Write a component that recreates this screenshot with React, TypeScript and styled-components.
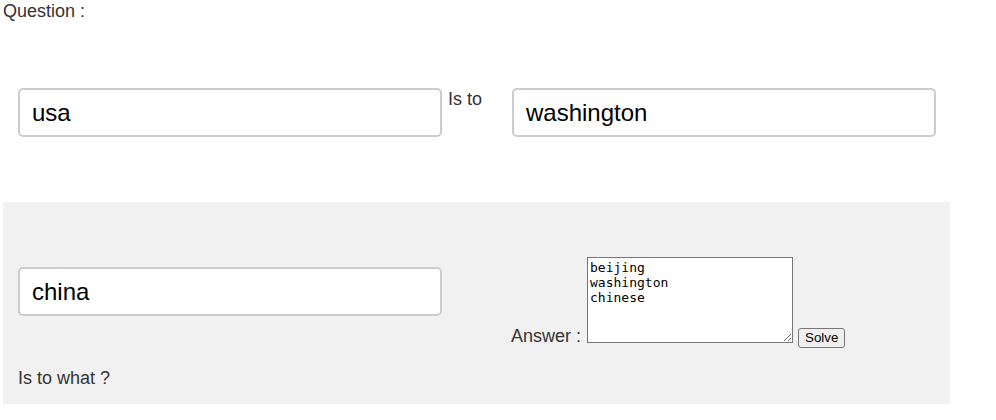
import React from "react";
import styled, { createGlobalStyle } from "styled-components";

const GlobalStyle = createGlobalStyle`
  html, body {
    margin: 0;
    padding: 0;
    background: #ffffff;
  }
  body {
    font-family: "Liberation Sans", Arial, Helvetica, sans-serif;
    font-size: 18px;
    color: #333333;
  }
`;

const Page = styled.div`
  width: 947px;
  padding-left: 3px;
`;

const Heading = styled.p`
  margin: 0;
  font-size: 18px;
  line-height: 22px;
  color: #333333;
`;

const Row = styled.div<{ $top: number }>`
  display: flex;
  align-items: flex-start;
  margin-top: ${(p) => p.$top}px;
`;

const LeftCell = styled.div`
  width: 493px;
  flex-shrink: 0;
  box-sizing: border-box;
  padding: 0 15px;
  display: flex;
  align-items: flex-start;
  gap: 6px;
`;

const RightCell = styled.div`
  padding: 0 15px 0 16px;
`;

const WordInput = styled.input`
  flex-shrink: 0;
  width: 424px;
  height: 49px;
  box-sizing: border-box;
  border: 2px solid #cccccc;
  border-radius: 5px;
  background: #ffffff;
  padding: 0 12px;
  margin: 0;
  font-family: "Liberation Sans", Arial, Helvetica, sans-serif;
  font-size: 24px;
  color: #000000;
  outline: none;
`;

const Label = styled.span`
  font-size: 18px;
  line-height: 22px;
  color: #333333;
  white-space: nowrap;
`;

const Panel = styled.div`
  margin-top: 65px;
  width: 947px;
  height: 202px;
  box-sizing: border-box;
  background: #f1f1f1;
  display: flex;
  align-items: flex-start;
`;

const PanelLeft = styled.div`
  width: 493px;
  flex-shrink: 0;
  box-sizing: border-box;
  padding: 65px 15px 0;
  display: flex;
  flex-direction: column;
  align-items: flex-start;
`;

const WhatLabel = styled(Label)`
  display: block;
  margin-top: 51px;
`;

const AnswerArea = styled.div`
  margin-top: 55px;
  padding-left: 15px;
  display: flex;
  align-items: flex-end;
`;

const AnswerLabel = styled(Label)`
  margin-right: 6px;
  margin-bottom: 1px;
`;

const AnswerBox = styled.textarea`
  width: 206px;
  height: 86px;
  box-sizing: border-box;
  margin: 0 5px 5px 0;
  padding: 2px;
  border: 1px solid #767676;
  border-radius: 0;
  background: #ffffff;
  font-family: "DejaVu Sans Mono", "Liberation Mono", monospace;
  font-size: 13px;
  line-height: 15px;
  color: #000000;
  outline: none;
`;

const SolveButton = styled.button`
  height: 20px;
  box-sizing: border-box;
  margin: 0;
  padding: 1px 6px;
  border: 1px solid #767676;
  border-radius: 3px;
  background: #efefef;
  font-family: "Liberation Sans", Arial, Helvetica, sans-serif;
  font-size: 13.33px;
  line-height: 16px;
  color: #000000;
  cursor: pointer;
`;

export default function App() {
  return (
    <>
      <GlobalStyle />
      <Page>
        <Heading>Question :</Heading>
        <Row $top={66}>
          <LeftCell>
            <WordInput defaultValue="usa" />
            <Label>Is to</Label>
          </LeftCell>
          <RightCell>
            <WordInput defaultValue="washington" />
          </RightCell>
        </Row>
        <Panel>
          <PanelLeft>
            <WordInput defaultValue="china" />
            <WhatLabel>Is to what ?</WhatLabel>
          </PanelLeft>
          <AnswerArea>
            <AnswerLabel>Answer :</AnswerLabel>
            <AnswerBox defaultValue={"beijing\nwashington\nchinese"} />
            <SolveButton type="button">Solve</SolveButton>
          </AnswerArea>
        </Panel>
      </Page>
    </>
  );
}
